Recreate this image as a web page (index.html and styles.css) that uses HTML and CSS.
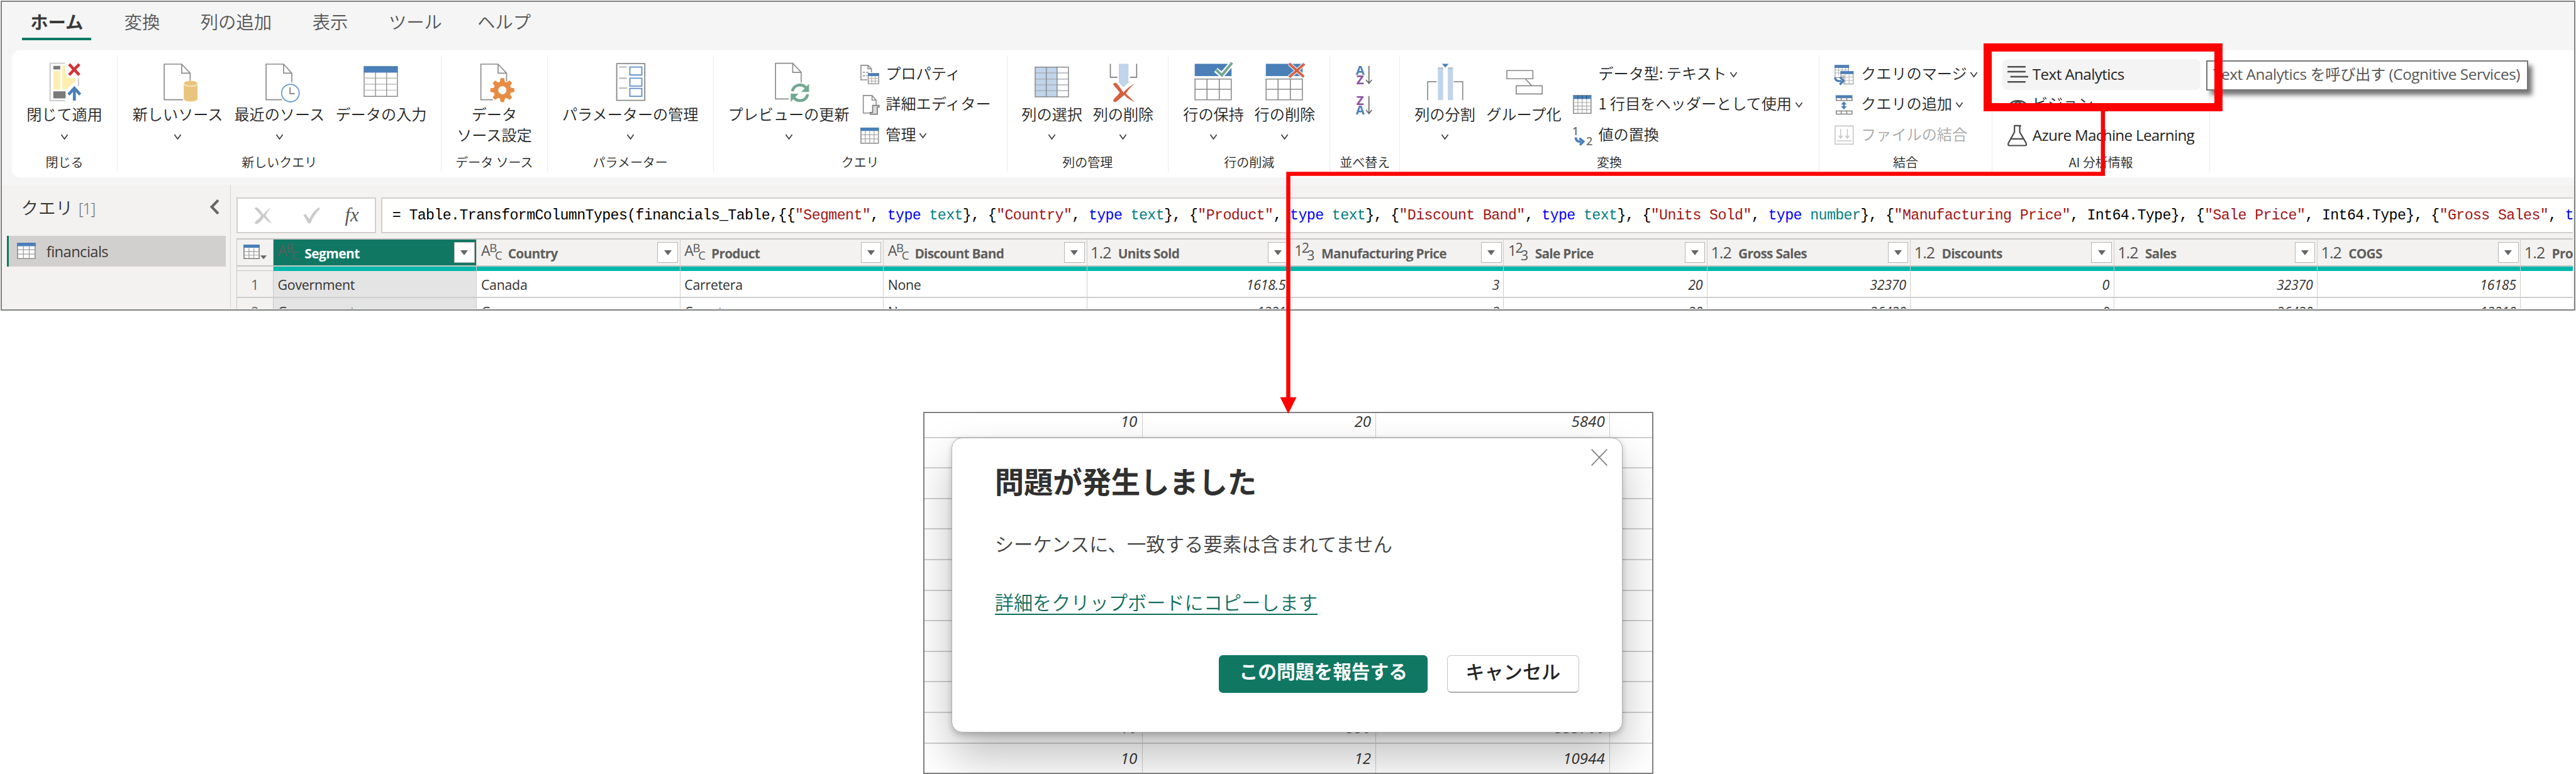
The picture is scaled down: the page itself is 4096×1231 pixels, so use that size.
FILE: index.html
```html
<!DOCTYPE html>
<html lang="ja">
<head>
<meta charset="utf-8">
<title>Power Query エディター</title>
<link rel="stylesheet" href="styles.css">
</head>
<body>
<svg class="defs" aria-hidden="true">
  <symbol id="chev" viewBox="0 0 14 10"><path d="M1.5 1.2 7 8.6 12.500 1.200" fill="none" stroke="#3c3c3c" stroke-width="1.800"/></symbol>
  <symbol id="page" viewBox="0 0 72 72"><path d="M45 67.500H13V6.500H43L57.500 22V35M43 6.500V22H57.500" fill="none" stroke="#8c8c8c" stroke-width="1.800"/></symbol>
  <symbol id="tbl" viewBox="0 0 32 28"><path d="M1 1h30v26H1z" fill="#fff" stroke="#8a8a8a" stroke-width="1.800"/><path d="M1 12.500h30M1 19.500h30M8.500 6v21M16 6v21M23.500 6v21" stroke="#a8a8a8" stroke-width="1.400"/><path d="M0 0h32v6H0z" fill="#4a7fb8"/></symbol>
</svg>
<div class="stage">
  <div class="window">
    <nav class="tabs">
      <span class="tab active">ホーム</span><span class="tab">変換</span><span class="tab">列の追加</span><span class="tab">表示</span><span class="tab">ツール</span><span class="tab help">ヘルプ</span>
    </nav>
    <div class="ribbon">
      <section class="group g-close">
        <div class="tools">
          <div class="big"><svg viewBox="0 0 72 72"><path d="M37 5H11.500V69H37M60 31V44" fill="none" stroke="#c6c6c6" stroke-width="2"/><path d="M17 9.500h12v6H17zM17 53h21v12H17z" fill="#7a7a7a"/><path d="M17 18h12v32H17zM32 9h5.500v13l6 8H55v6L45 44 38 50h-6z" fill="#fdefb2"/><path d="M44 6.500 61.500 25M61.500 6.500 44 25" stroke="#d13438" stroke-width="5"/><path d="M53 69V48M43 58.500 53 47.500 63 58.500" fill="none" stroke="#4a7fb8" stroke-width="5"/></svg><span>閉じて適用</span><svg class="chev"><use href="#chev"/></svg></div>
        </div>
        <h3>閉じる</h3>
      </section>
      <section class="group g-new">
        <div class="tools">
          <div class="big"><svg viewBox="0 0 72 72"><use href="#page" width="72" height="72"/><path d="M46.500 40v26c0 6 23.500 6 23.500 0V40z" fill="#e9c47c"/><ellipse cx="58.250" cy="39.500" rx="11.750" ry="4.500" fill="#e9c47c"/><path d="M46.500 40c1 5.500 22.500 5.500 23.500 0" fill="none" stroke="#f8ead0" stroke-width="1.800"/></svg><span>新しいソース</span><svg class="chev"><use href="#chev"/></svg></div>
          <div class="big"><svg viewBox="0 0 72 72"><path d="M40 67.500H13V6.500H43L57 22V38M43 6.500V22H57" fill="none" stroke="#8c8c8c" stroke-width="1.800"/><circle cx="54.600" cy="56" r="15" fill="#fff" stroke="#6c9bd0" stroke-width="2"/><path d="M54 46V57H62" fill="none" stroke="#777" stroke-width="1.800"/></svg><span>最近のソース</span><svg class="chev"><use href="#chev"/></svg></div>
          <div class="big"><svg viewBox="0 0 72 72"><path d="M7.500 11h57v50.500h-57z" fill="#fff" stroke="#8a8a8a" stroke-width="1.600"/><path d="M7 30.500h58M7 41h58M7 51h58" stroke="#bcbcbc" stroke-width="1.600"/><path d="M27 20v42M46 20v42" stroke="#8c8c8c" stroke-width="1.400"/><path d="M7 10h58v11H7z" fill="#4a7fb8"/></svg><span>データの入力</span></div>
        </div>
        <h3>新しいクエリ</h3>
      </section>
      <section class="group g-data">
        <div class="tools">
          <div class="big"><svg viewBox="0 0 72 72"><path d="M33 67.500H12.500V6.500H42L56.500 22V36M42 6.500V22H56.500" fill="none" stroke="#8c8c8c" stroke-width="1.800"/><g transform="translate(49.300 51)" fill="#e78c42"><circle r="15"/><g id="teeth"><path d="M-4.500-13-3-20.500H3L4.500-13zM-4.500 13-3 20.500H3L4.500 13zM-13-4.500-20.500-3V3L-13 4.500zM13-4.500 20.500-3V3L13 4.500z"/></g><use href="#teeth" transform="rotate(45)"/><circle r="7" fill="#fff"/></g></svg><span>データ<br>ソース設定</span></div>
        </div>
        <h3>データ ソース</h3>
      </section>
      <section class="group g-param">
        <div class="tools">
          <div class="big wide"><svg viewBox="0 0 72 72"><path d="M12.500 5.500h48v63h-48z" fill="none" stroke="#8a8a8a" stroke-width="2"/><path d="M16.500 11.500H30M16.500 30.500H30M16.500 47.500H30" stroke="#bdbdbd" stroke-width="2.400"/><path d="M35 11.500h20.500v13.500H35zM35 30.500h20.500V44H35zM35 48h20.500v13.500H35z" fill="none" stroke="#5e90c8" stroke-width="2"/></svg><span>パラメーターの管理</span><svg class="chev"><use href="#chev"/></svg></div>
        </div>
        <h3>パラメーター</h3>
      </section>
      <section class="group g-query">
        <div class="tools">
          <div class="big wide"><svg viewBox="0 0 72 72"><path d="M36 66H13V5H42.500L57 20.500V38M42.500 5V20.500H57" fill="none" stroke="#8c8c8c" stroke-width="1.800"/><g fill="none" stroke="#74a892" stroke-width="5"><path d="M42 53c2-12 17-14.500 24-5M68 58c-2 12-17 14.500-24 5"/></g><path d="M70.500 40v14H57zM39 71V57h13.500z" fill="#74a892"/></svg><span>プレビューの更新</span><svg class="chev"><use href="#chev"/></svg></div>
          <div class="list">
            <div class="item"><svg viewBox="0 0 36 36"><path d="M12 27H1V2H13L19 8V14M13 2V8H19M4 14h4M4 20h4M10 14h4M10 20h2" fill="none" stroke="#8c8c8c" stroke-width="1.700"/><path d="M13.500 16h18v17.500h-18z" fill="#fff" stroke="#8a8a8a" stroke-width="1.500"/><path d="M13 24.500h19M13 29h19M19.500 20v13M25.500 20v13" stroke="#a8a8a8" stroke-width="1.200"/><path d="M13 15.500h19v5H13z" fill="#4a7fb8"/></svg><span>プロパティ</span></div>
            <div class="item"><svg viewBox="0 0 36 36"><path d="M18 32H5V2H20L27 10V18M20 2V10H27" fill="none" stroke="#8c8c8c" stroke-width="1.700"/><path d="M21 19h11v3h-3v12H17v-3h4z" fill="#ddd" stroke="#7c7c7c" stroke-width="1.800"/></svg><span>詳細エディター</span></div>
            <div class="item"><svg viewBox="0 0 36 36"><use href="#tbl" x="0" y="4" width="32" height="28"/></svg><span>管理</span><svg class="chev"><use href="#chev"/></svg></div>
          </div>
        </div>
        <h3>クエリ</h3>
      </section>
      <section class="group g-cols">
        <div class="tools">
          <div class="big mid"><svg viewBox="0 0 72 72"><path d="M7.500 11h57v51.500h-57z" fill="#fff"/><path d="M7.500 11H45v51.500H7.500z" fill="#c0d4ea"/><path d="M7 21.500h58M7 32h58M7 42h58M7 52h58" stroke="#a9b0b8" stroke-width="1.600"/><path d="M7.500 11.500h57v51h-57zM26.500 11v51M45 11v51" fill="none" stroke="#8a8a8a" stroke-width="1.600"/></svg><span>列の選択</span><svg class="chev"><use href="#chev"/></svg></div>
          <div class="big mid"><svg viewBox="0 0 72 72"><path d="M13.500 6V29H25.500M58.500 6V29H47" fill="none" stroke="#7c7c7c" stroke-width="1.800"/><path d="M28 6h16.500v32L36 46l-8-8z" fill="#c0d4ea"/><path d="M18 41c2-4 6-3 8 0l10 14 3.500-4c4-4 9-8 15.500-11-6 5-10 9-13 14l-2 3 15 14c-5-2-13-6-17.500-11.500C31 64 28 68 23 71c-4 1-6-2-3-5 3-4 7-7 9.500-11z" fill="#d75f40"/></svg><span>列の削除</span><svg class="chev"><use href="#chev"/></svg></div>
        </div>
        <h3>列の管理</h3>
      </section>
      <section class="group g-rows">
        <div class="tools">
          <div class="big mid"><svg viewBox="0 0 72 72"><path d="M4 6h63v21H4z" fill="#4a7fb8"/><path d="M4.500 32h62v35.500h-62zM25 32v35M46 32v35M5 49.500h61" fill="none" stroke="#8a8a8a" stroke-width="1.700"/><path d="M40 16.500 50.500 25 68 4.500" fill="none" stroke="#fff" stroke-width="9"/><path d="M40.500 16 50.500 25.500 68 4" fill="none" stroke="#74a892" stroke-width="4.500"/></svg><span>行の保持</span><svg class="chev"><use href="#chev"/></svg></div>
          <div class="big mid"><svg viewBox="0 0 72 72"><path d="M4 6h63v21H4z" fill="#4a7fb8"/><path d="M4.500 32h62v35.500h-62zM25 32v35M46 32v35M5 49.500h61" fill="none" stroke="#8a8a8a" stroke-width="1.700"/><path d="M44 5.500 69 28M70 6 44 29" stroke="#d7e3f0" stroke-width="7"/><path d="M44 5.500 69 28M70 6 44 29" stroke="#d75f40" stroke-width="4"/></svg><span>行の削除</span><svg class="chev"><use href="#chev"/></svg></div>
        </div>
        <h3>行の削減</h3>
      </section>
      <section class="group g-sort">
        <div class="tools">
          <div class="list">
            <div class="item"><svg viewBox="0 0 36 36"><text x="3" y="18" class="ic-a">A</text><text x="4" y="34.500" class="ic-z">Z</text><path d="M25.500 3V33M20.500 27 25.500 33 30.500 27" fill="none" stroke="#666" stroke-width="1.800"/></svg></div>
            <div class="item"><svg viewBox="0 0 36 36"><text x="4" y="18" class="ic-z">Z</text><text x="3" y="34.500" class="ic-a">A</text><path d="M25.500 3V33M20.500 27 25.500 33 30.500 27" fill="none" stroke="#666" stroke-width="1.800"/></svg></div>
          </div>
        </div>
        <h3>並べ替え</h3>
      </section>
      <section class="group g-trans">
        <div class="tools">
          <div class="big mid"><svg viewBox="0 0 72 72"><path d="M24 13h9v55h-9zM41 13h9v55h-9z" fill="#c0d4ea"/><path d="M24 13h9M41 13h9" stroke="#a5a5a5" stroke-width="1.500"/><path d="M31 6h11.500L36.700 12.500z" fill="#4a7fb8"/><path d="M6.500 68V36.500H22M66.500 68V36.500H51" fill="none" stroke="#8a8a8a" stroke-width="1.800"/></svg><span>列の分割</span><svg class="chev"><use href="#chev"/></svg></div>
          <div class="big grp"><svg viewBox="0 0 72 72"><path d="M6.500 17.500h44.500v14H6.500zM22.500 43.500H67v14H22.500zM38 31.500 49 43.500" fill="none" stroke="#8a8a8a" stroke-width="1.800"/></svg><span>グループ化</span></div>
          <div class="list">
            <div class="item noicon"><span>データ型: テキスト</span><svg class="chev"><use href="#chev"/></svg></div>
            <div class="item"><svg viewBox="0 0 36 36"><path d="M1 2h30v30.500H1z" fill="#fff" stroke="#8a8a8a" stroke-width="1.700"/><path d="M1 14h30M1 20h30M1 26h30M8.500 8v24M16 8v24M23.500 8v24" stroke="#a8a8a8" stroke-width="1.300"/><path d="M1 2h30v6H1z" fill="#4a7fb8"/><path d="M8.500 2v6M16 2v6M23.500 2v6" stroke="#2f5c8c" stroke-width="1.500"/></svg><span>1 行目をヘッダーとして使用</span><svg class="chev"><use href="#chev"/></svg></div>
            <div class="item"><svg viewBox="0 0 36 36"><text x="-1" y="17" class="ic-n">1</text><text x="23" y="34" class="ic-n">2</text><path d="M5 21c0 6 4 8 9 7M11 22.500 18 28 12 34" fill="none" stroke="#4a7fb8" stroke-width="4"/></svg><span>値の置換</span></div>
          </div>
        </div>
        <h3>変換</h3>
      </section>
      <section class="group g-merge">
        <div class="tools">
          <div class="list">
            <div class="item"><svg viewBox="0 0 36 36"><path d="M1 2h23v21H1z" fill="#fff" stroke="#9a9a9a" stroke-width="1.300"/><path d="M1 10h23M1 15h23M7 6v14M13 6v14M19 6v14" stroke="#b5b5b5" stroke-width="1.200"/><path d="M0 1.500h25v5H0z" fill="#4a7fb8"/><path d="M11 13h21v21H16V20h-5z" fill="#fff" stroke="#9a9a9a" stroke-width="1.300"/><path d="M11 22h21M16 28h16M18 17v17M25 17v17" stroke="#b5b5b5" stroke-width="1.200"/><path d="M10 12h22.500v5H10z" fill="#4a7fb8"/><path d="M1 23c0 5 5 7 11 5.500M9 22 15.500 28.500 9 35" fill="none" stroke="#4a7fb8" stroke-width="3.500"/></svg><span>クエリのマージ</span><svg class="chev"><use href="#chev"/></svg></div>
            <div class="item"><svg viewBox="0 0 36 36"><path d="M3 6h27v4.500H3zM3 28.500h27V34H3zM11.500 6v5M21 6v5M11.500 28v5M21 28v5" fill="none" stroke="#858585" stroke-width="1.700"/><path d="M2 1.500h28.500V6H2z" fill="#4a7fb8"/><path d="M16 12l5 5.500h-3.500v3H21L16 26l-5-5.500h3.500v-3H11z" fill="#4a7fb8"/></svg><span>クエリの追加</span><svg class="chev"><use href="#chev"/></svg></div>
            <div class="item off"><svg viewBox="0 0 36 36"><path d="M1 1.500h31v31H1zM4 27h25M10.500 7v15M7 18l3.500 4L14 18M22 7v15M18.500 18l3.500 4 3.500-4" fill="none" stroke="#c6c6c6" stroke-width="1.700"/></svg><span>ファイルの結合</span></div>
          </div>
        </div>
        <h3>結合</h3>
      </section>
      <section class="group g-ai">
        <div class="tools">
          <div class="list">
            <div class="item hover"><svg viewBox="0 0 36 36"><path d="M0 4.500h31M0 13h31M5 21.500h30.500M0 30.500h31" stroke="#4c4c4c" stroke-width="2.600"/></svg><span class="lat t1">Text Analytics</span></div>
            <div class="item"><svg viewBox="0 0 36 36"><path d="M2 20C8 8 28 8 34 20" fill="none" stroke="#4c4c4c" stroke-width="2.600"/><circle cx="18" cy="20" r="7" fill="none" stroke="#4c4c4c" stroke-width="2.600"/></svg><span>ビジョン</span></div>
            <div class="item"><svg viewBox="0 0 36 36"><path d="M11 1H22V3M12 1V12L1.500 31C.500 34 2 35 4 35H30C32 35 33 34 32 31L21 12V1M6 23.500H27.500" fill="none" stroke="#4c4c4c" stroke-width="2.400"/></svg><span class="lat t2">Azure Machine Learning</span></div>
          </div>
        </div>
        <h3>AI 分析情報</h3>
      </section>
    </div>

    <div class="work">
      <aside class="pane">
        <div class="pane-head"><span>クエリ <i>[1]</i></span><svg viewBox="0 0 18 26"><path d="M15 1.500 4 13 15 24.500" fill="none" stroke="#666" stroke-width="4.500"/></svg></div>
        <div class="query"><svg viewBox="0 0 32 28"><path d="M1 1h30v26H1z" fill="#fff" stroke="#808080" stroke-width="1.500"/><path d="M1 12h30M1 19.500h30M11 6v21M21 6v21" stroke="#999" stroke-width="1.300"/><path d="M0 0h32v6H0z" fill="#4a7fb8"/></svg><span>financials</span></div>
      </aside>
      <main class="main">
        <div class="fbar">
          <div class="fbtns">
            <svg viewBox="0 0 34 32"><path d="M1 3c1-3 6-2 7 0l9 11C22 8 26 4 32 1c-5 5-9 10-11 15l12 15C27 28 22 24 18 19 14 24 12 28 6 31c-4 1-6-2-3-5 4-3 8-6 10-10z" fill="#cbcbcb"/></svg>
            <svg viewBox="0 0 32 32"><path d="M1 15 5 13 12 22C17 12 23 5 30 1L31 4C24 11 18 20 14 30H10z" fill="#cbcbcb"/></svg>
            <em>fx</em>
          </div>
          <div class="formula">= Table.TransformColumnTypes(financials_Table,{{<s>"Segment"</s>, <b>type</b> <u>text</u>}, {<s>"Country"</s>, <b>type</b> <u>text</u>}, {<s>"Product"</s>, <b>type</b> <u>text</u>}, {<s>"Discount Band"</s>, <b>type</b> <u>text</u>}, {<s>"Units Sold"</s>, <b>type</b> <u>number</u>}, {<s>"Manufacturing Price"</s>, Int64.Type}, {<s>"Sale Price"</s>, Int64.Type}, {<s>"Gross Sales"</s>, <b>t</b></div>
        </div>
        <div class="grid">
          <div class="row head">
            <div class="num"><svg viewBox="0 0 40 26"><path d="M1 1h26v23H1z" fill="#fff" stroke="#777" stroke-width="1.600"/><path d="M1 12h26M1 18h26M9.500 6v18M18 6v18" stroke="#999" stroke-width="1.200"/><path d="M0 0h28v5.500H0z" fill="#4a7fb8"/><path d="M29 18.500h11L34.500 25z" fill="#666"/></svg></div>
            <div class="cell sel"><span class="ty"><i>A</i><sup>B</sup><sub>C</sub></span><span class="nm">Segment</span><span class="dd"></span></div>
            <div class="cell"><span class="ty"><i>A</i><sup>B</sup><sub>C</sub></span><span class="nm">Country</span><span class="dd"></span></div>
            <div class="cell"><span class="ty"><i>A</i><sup>B</sup><sub>C</sub></span><span class="nm">Product</span><span class="dd"></span></div>
            <div class="cell"><span class="ty"><i>A</i><sup>B</sup><sub>C</sub></span><span class="nm">Discount Band</span><span class="dd"></span></div>
            <div class="cell"><span class="ty dec">1.2</span><span class="nm">Units Sold</span><span class="dd"></span></div>
            <div class="cell mp"><span class="ty int"><i>1</i><sup>2</sup><sub>3</sub></span><span class="nm">Manufacturing Price</span><span class="dd"></span></div>
            <div class="cell"><span class="ty int"><i>1</i><sup>2</sup><sub>3</sub></span><span class="nm">Sale Price</span><span class="dd"></span></div>
            <div class="cell"><span class="ty dec">1.2</span><span class="nm">Gross Sales</span><span class="dd"></span></div>
            <div class="cell"><span class="ty dec">1.2</span><span class="nm">Discounts</span><span class="dd"></span></div>
            <div class="cell"><span class="ty dec">1.2</span><span class="nm">Sales</span><span class="dd"></span></div>
            <div class="cell"><span class="ty dec">1.2</span><span class="nm">COGS</span><span class="dd"></span></div>
            <div class="cell last"><span class="ty dec">1.2</span><span class="nm">Pro</span></div>
          </div>
          <div class="row qual"><div class="num"></div><div class="cell"></div><div class="cell"></div><div class="cell"></div><div class="cell"></div><div class="cell"></div><div class="cell mp"></div><div class="cell"></div><div class="cell"></div><div class="cell"></div><div class="cell"></div><div class="cell"></div><div class="cell"></div></div>
          <div class="row data"><div class="num">1</div><div class="cell sel">Government</div><div class="cell">Canada</div><div class="cell">Carretera</div><div class="cell">None</div><div class="cell n">1618.5</div><div class="cell n mp">3</div><div class="cell n">20</div><div class="cell n">32370</div><div class="cell n">0</div><div class="cell n">32370</div><div class="cell n">16185</div><div class="cell n"></div></div>
          <div class="row data"><div class="num">2</div><div class="cell sel">Government</div><div class="cell">Germany</div><div class="cell">Carretera</div><div class="cell">None</div><div class="cell n">1321</div><div class="cell n mp">3</div><div class="cell n">20</div><div class="cell n">26420</div><div class="cell n">0</div><div class="cell n">26420</div><div class="cell n">13210</div><div class="cell n"></div></div>
        </div>
      </main>
    </div>
  </div>

  <div class="lower">
    <div class="lrow first"><div>10</div><div>20</div><div>5840</div></div>
    <div class="lrow"><div></div><div></div><div></div></div>
    <div class="lrow"><div></div><div></div><div></div></div>
    <div class="lrow"><div></div><div></div><div></div></div>
    <div class="lrow"><div></div><div></div><div></div></div>
    <div class="lrow"><div></div><div></div><div></div></div>
    <div class="lrow"><div></div><div></div><div></div></div>
    <div class="lrow"><div></div><div></div><div></div></div>
    <div class="lrow"><div></div><div></div><div></div></div>
    <div class="lrow"><div></div><div></div><div></div></div>
    <div class="lrow"><div>10</div><div>350</div><div>333700</div></div>
    <div class="lrow"><div>10</div><div>12</div><div>10944</div></div>
    <div class="dialog">
      <svg class="x" viewBox="0 0 28 29"><path d="M.700.700 27.300 28.300M27.300.700.700 28.300" stroke="#808080" stroke-width="1.900"/></svg>
      <h1>問題が発生しました</h1>
      <p>シーケンスに、一致する要素は含まれてません</p>
      <a>詳細をクリップボードにコピーします</a>
      <div class="btns"><button class="pri">この問題を報告する</button><button>キャンセル</button></div>
    </div>
  </div>

  <div class="tip">Text Analytics を呼び出す (Cognitive Services)</div>
  <div class="mark"></div>
  <svg class="arrow" viewBox="0 0 4408 720"><path d="M3598.500 190V297.500H2204.500V684" fill="none" stroke="#f00" stroke-width="7"/><path d="M2190.500 680h28L2204.500 708z" fill="#f00"/></svg>
</div>
</body>
</html>
```
FILE: styles.css
```css
* { box-sizing: border-box; }
body { margin: 0; background: #fff; overflow: hidden; font-family: "Open Sans", "Noto Sans CJK JP", sans-serif; color: #242424; }
.defs { position: absolute; width: 0; height: 0; }
.stage { position: relative; width: 4408px; height: 1325px; zoom: 0.92922; padding: 1px; overflow: hidden; }
.window { width: 4406px; height: 531px; border: 3px solid #808381; background: #f5f5f5; overflow: hidden; }
svg { display: block; flex: none; overflow: visible; }

/* Tabs */
.tabs { height: 83px; display: flex; align-items: flex-start; gap: 45.5px; padding-left: 35px; font: 350 30.5px/66px "Noto Sans CJK JP", sans-serif; color: #555; white-space: nowrap; }
.tab { height: 66px; padding: 0 12px; line-height: 66px; }
.tab.active { width: 118px; padding: 0; text-align: center; font-weight: 700; color: #3a3a3a; border-bottom: 5px solid #0f7864; margin-right: -1px; }
.tab.help { margin-left: -9px; }

/* Ribbon */
.ribbon { margin-left: 17px; height: 217px; background: #fff; border-radius: 14px 0 0 14px; display: flex; padding-top: 9px; font-family: "Noto Sans CJK JP", sans-serif; font-weight: 350; }
.group { height: 199px; border-right: 2px solid #ececec; flex: none; padding-top: 6px; display: flex; flex-direction: column; }
.group h3 { margin: 0; font-size: 21.5px; font-weight: 350; line-height: 28px; text-align: center; }
.tools { height: 162px; display: flex; justify-content: center; }
.g-close { width: 181.5px; } .g-new { width: 554px; } .g-data { width: 181.5px; } .g-param { width: 284px; }
.g-query { width: 502.5px; } .g-cols { width: 276px; } .g-rows { width: 277px; } .g-sort { width: 119px; }
.g-trans { width: 718px; } .g-merge { width: 295.5px; } .g-ai { width: 373px; }
.big { width: 174px; display: flex; flex-direction: column; align-items: center; font-size: 26px; line-height: 35px; text-align: center; white-space: nowrap; padding-top: 2px; }
.big > svg:first-child { width: 72px; height: 72px; margin-bottom: 3px; }
.chev, .big > svg.chev { width: 14px; height: 10px; }
.big > svg.chev { margin-top: 16px; }
.wide { width: 220px; } .mid { width: 122px; } .grp { width: 148px; }
.list { flex: none; }
.item { height: 52.3px; display: flex; align-items: center; font-size: 26px; white-space: nowrap; }
.item > svg:first-child { width: 36px; height: 36px; margin-right: 7px; }
.item span { line-height: 38px; padding-bottom: 6px; }
.item .chev { margin-left: 5px; }
.noicon { padding-left: 43px; }
.off { color: #a8a8a8; }
.g-query .tools { justify-content: flex-start; padding-left: 18.5px; }
.g-query .list { margin-left: 13px; }
.g-sort .item > svg:first-child { margin-right: 0; }
.g-trans .tools { justify-content: flex-start; padding-left: 16px; }
.g-trans .list { margin-left: 10.5px; }
.g-merge .tools { justify-content: flex-start; padding-left: 26px; }
.g-merge .item > svg:first-child { margin-right: 9px; }
.g-ai .tools { justify-content: flex-start; padding-left: 18px; }
.g-ai .item { width: 339px; padding-left: 8px; border-radius: 8px; }
.g-ai .item.hover { background: #f4f4f4; }
.item .lat { font-family: "Open Sans", sans-serif; font-weight: 400; padding-bottom: 2px; font-size: 26px; }
.t1 { letter-spacing: -0.6px; } .t2 { letter-spacing: -0.7px; }
.ic-a, .ic-z, .ic-n { font: 700 22px "Open Sans", sans-serif; fill: #4a7fb8; }
.ic-z { fill: #8a4fa8; }
.ic-n { fill: #707070; font-size: 19px; font-weight: 600; }

/* Work area */
.work { height: 212px; margin-top: 13px; background: #f3f2f1; display: flex; }
.pane { width: 392px; border-right: 2px solid #d8d6d4; padding-left: 9px; flex: none; }
.pane-head { height: 87px; padding: 0 18px 12px 24px; display: flex; align-items: center; justify-content: space-between; font: 350 29.5px "Noto Sans CJK JP", sans-serif; color: #323130; }
.pane-head i { font: 300 27px "Open Sans", sans-serif; color: #666; letter-spacing: -1.5px; margin-left: 3px; }
.pane-head svg { width: 18px; height: 26px; }
.query { width: 374px; height: 53px; background: #d2d0ce; border-left: 4px solid #0f7864; display: flex; align-items: center; padding-left: 14px; gap: 18px; font-size: 25.5px; letter-spacing: -0.6px; color: #3b3a39; }
.query span { padding-top: 2px; }
.query svg { width: 32px; height: 28px; }
.main { flex: none; width: 4008px; padding: 22px 0 0 9px; overflow: hidden; }
.fbar { height: 61px; display: flex; gap: 9px; margin-bottom: 9px; }
.fbtns { width: 239px; border: 3px solid #d2d0ce; background: #fff; display: flex; align-items: center; padding-left: 27px; flex: none; }
.fbtns svg { width: 34px; height: 30px; margin-right: 50px; }
.fbtns svg + svg { width: 31px; margin-right: 42px; }
.fbtns em { font: italic 33px "Liberation Serif", serif; color: #555; }
.formula { flex: none; width: 3800px; border: 3px solid #d2d0ce; background: #fffffe; padding-left: 17px; font: 25px/60px "Liberation Mono", monospace; letter-spacing: -0.64px; color: #000; white-space: pre; overflow: hidden; }
.formula s { color: #a31515; text-decoration: none; } .formula b { color: #00f; font-weight: 400; } .formula u { color: #008080; text-decoration: none; }

/* Data grid */
.grid { width: 4300px; border-left: 2px solid #c8c6c4; }
.row { display: flex; }
.num { width: 63px; flex: none; border-right: 2px solid #c8c6c4; background: #f3f2f1; display: flex; align-items: center; justify-content: center; color: #605e5c; font-size: 23px; }
.cell { width: 348px; flex: none; border-right: 2px solid #d0cecc; display: flex; align-items: center; }
.mp { width: 365.5px; }
.head { height: 48px; border-top: 3px solid #c8c6c4; border-bottom: 3px solid #c8c6c4; }
.head .num svg { width: 40px; height: 26px; }
.head .cell { padding: 0 3px 0 7px; color: #605e5c; font-weight: 700; font-size: 22.5px; letter-spacing: -0.8px; white-space: nowrap; }
.head .cell.sel { background: #107763; color: #fff; }
.head .cell.sel .nm { letter-spacing: -0.6px; }
.head .sel .ty { color: #5f5e5c; }
.nm { padding-top: 3px; }
.ty { width: 46px; flex: none; font: 400 25px/40px "Open Sans", sans-serif; letter-spacing: -1.5px; display: flex; color: #555; }
.ty i { font-style: normal; margin-top: 1px; }
.ty sup, .ty sub { font-size: 20px; vertical-align: baseline; }
.ty sup { margin-top: -5px; }
.ty sub { margin-top: 8px; margin-left: -2px; }
.ty.int sup, .ty.int sub { font-size: 23px; }
.ty.int { letter-spacing: -2px; }
.dec { font-size: 27px; margin-left: -1px; width: 47px; letter-spacing: -1px; }
.dd { width: 35px; height: 35px; margin-left: auto; flex: none; background: #fff; border: 2px solid #b8b6b4; display: flex; align-items: center; justify-content: center; }
.dd::after { content: ""; border: 7.5px solid transparent; border-top: 9px solid #666; border-bottom: 0; }
.qual { height: 8px; }
.qual .cell { background: #01b8aa; }
.qual .num { border-bottom: 2px solid #c8c6c4; }
.data { height: 46px; border-bottom: 3px solid #d0cecc; background: #fff; font-size: 23px; color: #323130; }
.data .cell { padding: 2px 7px 0; letter-spacing: -0.3px; }
.data .num { padding-top: 2px; }
.data .sel { background: #e4e4e4; }
.data .n { justify-content: flex-end; font-style: italic; }

/* Error dialog over the table */
.lower { position: absolute; left: 1580px; top: 705px; width: 1249px; height: 620px; border: 3px solid #808080; overflow: hidden; background: #fff; }
.lrow { height: 52.3px; display: flex; border-bottom: 3px solid #cfcfcf; font-style: italic; font-size: 26px; line-height: 49px; color: #323130; }
.lrow.first { height: 42.5px; line-height: 29px; }
.lrow div { width: 400px; flex: none; border-right: 2px solid #cfcfcf; text-align: right; padding-right: 8px; }
.lrow div:first-child { width: 373px; }
.dialog { position: absolute; left: 46px; top: 42px; width: 1148px; height: 505px; background: #fff; border: 2px solid #b0b0b0; border-radius: 18px; box-shadow: 0 4px 10px rgba(0,0,0,.2), 0 40px 75px rgba(0,0,0,.25); padding: 37px 73px 0 73px; font-family: "Noto Sans CJK JP", sans-serif; }
.x { position: absolute; right: 24px; top: 18px; width: 28px; height: 29px; }
.dialog h1 { margin: 0; font-size: 50px; line-height: 70px; letter-spacing: -0.2px; color: #303030; }
.dialog p { margin: 45px 0 0; font-size: 32.7px; line-height: 56px; color: #404040; font-weight: 350; white-space: nowrap; }
.dialog a { display: inline-block; margin-top: 53px; font-size: 32.5px; line-height: 38px; color: #0f6e5c; border-bottom: 3px solid #0b6b58; height: 41px; font-weight: 350; white-space: nowrap; }
.btns { display: flex; justify-content: flex-end; gap: 33px; margin-top: 69px; }
.btns button { width: 226px; height: 65px; padding: 0 0 10px; font: 500 32.5px "Noto Sans CJK JP", sans-serif; background: #fff; color: #242424; border: 2px solid #c4c4c4; border-bottom: 3px solid #adadad; border-radius: 7px; white-space: nowrap; }
.btns .pri { width: 357px; background: #107763; border-color: #107763; color: #fff; font-weight: 700; font-size: 32px; }

/* Callouts */
.tip { position: absolute; left: 3775px; top: 103px; width: 551px; height: 52px; border: 3px solid #757575; background: #fff; box-shadow: 7px 9px 8px rgba(0,0,0,.55); padding-left: 10px; font-size: 26.2px; line-height: 42px; letter-spacing: -0.5px; color: #575757; white-space: nowrap; }
.mark { position: absolute; left: 3394px; top: 74px; width: 409px; height: 117px; border: 14px solid #f00; }
.arrow { position: absolute; left: 0; top: 0; width: 4408px; height: 720px; }
```
